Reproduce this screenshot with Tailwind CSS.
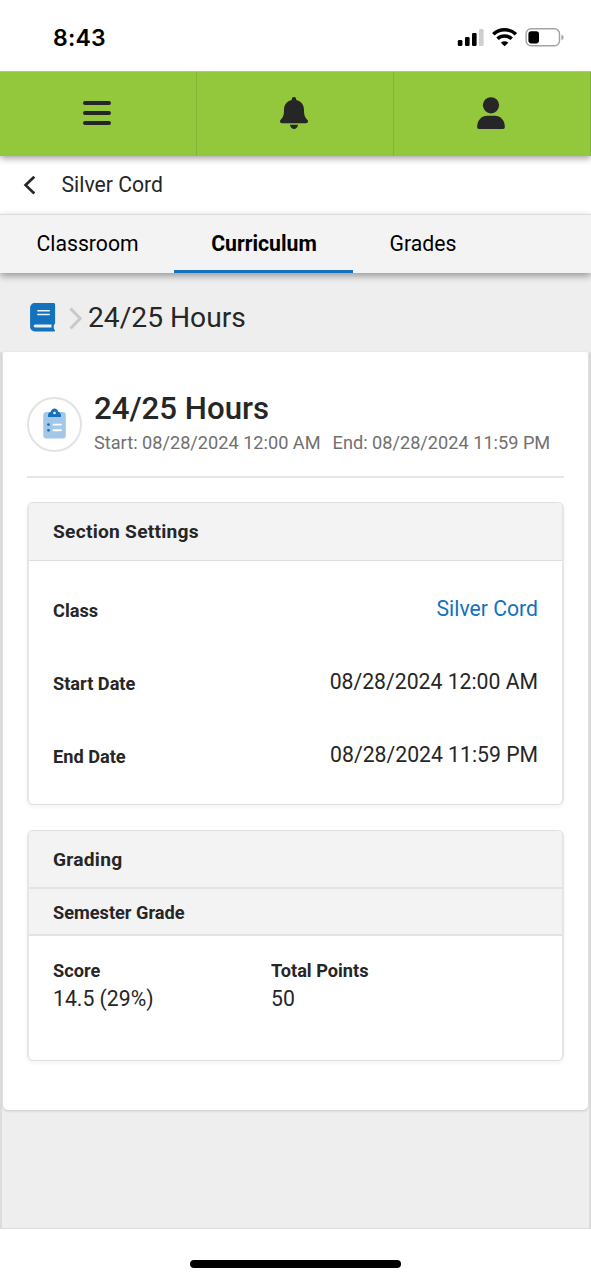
<!DOCTYPE html>
<html lang="en">
<head>
<meta charset="utf-8">
<title>Silver Cord</title>
<script src="https://cdn.jsdelivr.net/npm/@tailwindcss/browser@4"></script>
</head>
<body class="bg-white">
<div class="w-[591px] h-[1280px] flex flex-col overflow-hidden bg-white text-[#262626] text-[21.2px] leading-[28px]" style="font-family: Roboto, 'Liberation Sans', sans-serif">

  <!-- Status bar -->
  <div class="relative z-30 bg-white h-[71px] shrink-0 flex justify-between pt-[22px] pl-[53px] pr-[27px] text-black">
    <span class="text-[23px] leading-[32px] font-semibold tracking-[0.2px]" style="font-family: Inter, sans-serif">8:43</span>
    <svg width="107" height="22" viewBox="0 0 107 22" class="mt-[4px]">
      <rect x="0.8" y="14" width="4.6" height="6" rx="1.3"/>
      <rect x="8" y="11" width="4.6" height="9" rx="1.3"/>
      <rect x="15" y="7" width="4.6" height="13" rx="1.3"/>
      <rect x="22" y="3" width="4.6" height="17" rx="1.3" fill="#cfcfcf"/>
      <g fill="none" stroke="#000" stroke-width="3.500">
        <path d="M36.300 8.300a16.300 16.300 0 0 1 22.600 0"/>
        <path d="M40.500 12.800a10.300 10.300 0 0 1 14.200 0"/>
      </g>
      <path d="M47.600 20.200l-3.700-3.500a5.400 5.400 0 0 1 7.400 0z"/>
      <rect x="69.100" y="2.800" width="33.400" height="17" rx="5" fill="none" stroke="#a3a3a3" stroke-width="1.400"/>
      <rect x="71.400" y="5.200" width="10.600" height="12.200" rx="2.800"/>
      <path d="M104.400 8.700c1.400.5 2.200 1.500 2.200 2.700s-.8 2.200-2.200 2.700z" fill="#a3a3a3"/>
    </svg>
  </div>

  <!-- Main navigation -->
  <nav class="relative z-20 h-[85px] shrink-0 grid grid-cols-3 bg-[#93c83d] border-t border-[#a8d364] shadow-[0_2px_7px_rgba(0,0,0,0.4)]">
    <div class="flex justify-center items-center pr-[2px] pb-[3px] border-r-[1.5px] border-[#84b437]">
      <svg width="30" height="28" viewBox="0 0 30 28" stroke="#262626" stroke-width="4" stroke-linecap="round"><path d="M3 4h24M3 14h24M3 24h24"/></svg>
    </div>
    <div class="flex justify-center items-center pr-[2px] pb-[3px] border-r-[1.5px] border-[#84b437]">
      <svg width="30" height="34" viewBox="0 0 30 34" fill="#262626"><path d="M15 1c1.300 0 2.200.9 2.200 2.200v.9c4.900 1.100 7.800 4.900 7.800 9.700 0 6 .9 7.300 3.500 10.300 1.200 1.500.4 3.100-1.300 3.100H2.800c-1.700 0-2.500-1.600-1.300-3.100C4.100 21.100 5 19.800 5 13.800c0-4.800 2.900-8.600 7.800-9.700v-.9C12.800 1.900 13.700 1 15 1z"/><path d="M11 28.800h8c-.3 2.600-1.900 4.200-4 4.200s-3.700-1.600-4-4.200z"/></svg>
    </div>
    <div class="flex justify-center items-center pr-[2px] pb-[3px] border-r-[1.5px] border-[#84b437]">
      <svg width="30" height="34" viewBox="0 0 30 34" fill="#262626"><circle cx="15" cy="9.300" r="8.100"/><path d="M11.500 19.800h7c6.200 0 10.300 4.700 10.300 10.900v.6c0 1-.7 1.700-1.700 1.700H2.900c-1 0-1.700-.7-1.700-1.700v-.6c0-6.200 4.100-10.900 10.300-10.900z"/></svg>
    </div>
  </nav>

  <!-- Course header -->
  <header class="h-[58px] shrink-0 flex items-center pl-[22px] pb-px gap-[24.5px]">
    <svg width="15" height="20" viewBox="0 0 15 20" fill="none" stroke="#262626" stroke-width="2.700"><path d="M12.300 1.700L3.600 10.100l8.700 8.400"/></svg>
    <h1>Silver Cord</h1>
  </header>

  <!-- Tabs -->
  <div class="relative z-10 h-[59px] shrink-0 flex bg-[#f3f3f3] border-t border-[#dcdcdc] text-black shadow-[0_3px_7px_rgba(0,0,0,0.36)]">
    <div class="w-[174px] pl-[36.5px] pt-[15px]">Classroom</div>
    <div class="w-[179px] pt-[15px] pl-px text-center font-bold border-b-[3px] border-[#1371bd]">Curriculum</div>
    <div class="pl-[36.5px] pt-[15px]">Grades</div>
  </div>

  <!-- Breadcrumb -->
  <div class="h-[79px] shrink-0 flex items-center bg-[#eee] pl-[29px] pt-[10px]">
    <svg width="27" height="30" viewBox="0 0 27 30" class="-mt-[2px]"><path d="M6 1h18.500c1 0 1.600.7 1.600 1.600v18.500c0 .7-.4 1.200-1 1.500-.5 1.600-.5 3.200 0 4.600.5.300.9.800.9 1.200 0 .6-.5 1-1.100 1H6c-2.900 0-4.900-2-4.900-4.900V6C1.100 3.100 3.100 1 6 1z" fill="#1371bd"/><path d="M6.200 22.400h16.300v3H6.200c-2.100 0-2.100-3 0-3z" fill="#eee"/><path d="M8.800 8.800h11.500M8.800 12.600h11.500" stroke="#e8f1f8" stroke-width="1.500" stroke-linecap="round"/></svg>
    <svg width="15" height="23" viewBox="0 0 15 23" class="ml-[12px] mt-[1px]" fill="none" stroke="#c9c9c9" stroke-width="3"><path d="M2.500 1.500l9.700 10-9.700 10"/></svg>
    <span class="ml-[5px] pt-px text-[28.200px]">24/25 Hours</span>
  </div>

  <!-- Content -->
  <div class="h-[877px] shrink-0 bg-[#eee] border-x-2 border-b border-[#dcdcdc]">
    <main class="h-[758px] mx-px px-6 bg-white rounded-b-[5px] rounded-t-[2px] shadow-[0_1px_3px_rgba(0,0,0,0.16)]">
      <div class="h-[126px] flex border-b-2 border-[#e6e6e6] pt-[45px]">
        <div class="size-[55px] -mt-[0.5px] shrink-0 rounded-full border-2 border-[#e3e3e3] flex items-center justify-center">
          <svg width="23" height="31" viewBox="0 0 23 31" class="-mt-[2px]"><rect x="0.300" y="4" width="22.500" height="26.500" rx="3" fill="#a3c7e6"/><path d="M5 9V7.500C5 5.400 6.100 4.100 7.700 3.900 8.100 1.900 9.600.5 11.500.5s3.400 1.400 3.800 3.400c1.600.2 2.700 1.500 2.700 3.600V9z" fill="#1371bd"/><circle cx="11.500" cy="5" r="1.300" fill="#fff"/><circle cx="5.500" cy="16.600" r="1.400" fill="#1371bd"/><circle cx="5.500" cy="22.300" r="1.400" fill="#1371bd"/><path d="M10.500 16.600h7.500M10.500 22.300h7.500" stroke="#fff" stroke-width="1.900" stroke-linecap="round"/></svg>
        </div>
        <div class="pl-[12px] -mt-[7px] whitespace-nowrap">
          <h2 class="text-[31.200px] leading-[37px] font-medium">24/25 Hours</h2>
          <p class="mt-[3px] text-[18.160px] leading-[26px] text-[#707070] flex gap-[12px]"><span>Start: 08/28/2024 12:00 AM</span><span>End: 08/28/2024 11:59 PM</span></p>
        </div>
      </div>

      <section class="mt-6 h-[303px] rounded-[6px] border-x-2 border-y border-x-[#e6e6e6] border-y-[#dfdfdf] shadow-[0_2px_4px_rgba(0,0,0,0.05)] overflow-hidden">
        <h3 class="h-[58px] bg-[#f3f3f3] border-b border-[#dedede] px-6 pt-[15px] text-[19.200px] tracking-[0.25px] font-bold">Section Settings</h3>
        <dl class="px-6 pt-[34px]">
          <div class="h-[73px] flex justify-between"><dt class="text-[18.180px] font-bold pt-[2px]">Class</dt><dd class="text-[#1371bd]">Silver Cord</dd></div>
          <div class="h-[73px] flex justify-between"><dt class="text-[18.180px] font-bold pt-[2px]">Start Date</dt><dd>08/28/2024 12:00 AM</dd></div>
          <div class="flex justify-between"><dt class="text-[18.180px] font-bold pt-[2px]">End Date</dt><dd>08/28/2024 11:59 PM</dd></div>
        </dl>
      </section>

      <section class="mt-[25px] h-[231px] rounded-[6px] border-x-2 border-y border-x-[#e6e6e6] border-y-[#dfdfdf] shadow-[0_2px_4px_rgba(0,0,0,0.05)] overflow-hidden">
        <h3 class="h-[58px] bg-[#f3f3f3] border-b-2 border-[#e3e3e3] px-6 pt-[15px] text-[19.200px] tracking-[0.25px] font-bold">Grading</h3>
        <h4 class="h-[47px] bg-[#f3f3f3] border-b-2 border-[#e3e3e3] px-6 pt-[10px] text-[18.180px] font-bold">Semester Grade</h4>
        <dl class="px-6 pt-[21px] flex">
          <div class="w-[218px]"><dt class="text-[18.180px] font-bold">Score</dt><dd>14.5 (29%)</dd></div>
          <div><dt class="text-[18.180px] font-bold">Total Points</dt><dd>50</dd></div>
        </dl>
      </section>
    </main>
  </div>

  <!-- Home indicator -->
  <div class="h-[51px] flex justify-center pt-[31px]"><div class="w-[211px] h-[8px] rounded-full bg-black"></div></div>
</div>
</body>
</html>
